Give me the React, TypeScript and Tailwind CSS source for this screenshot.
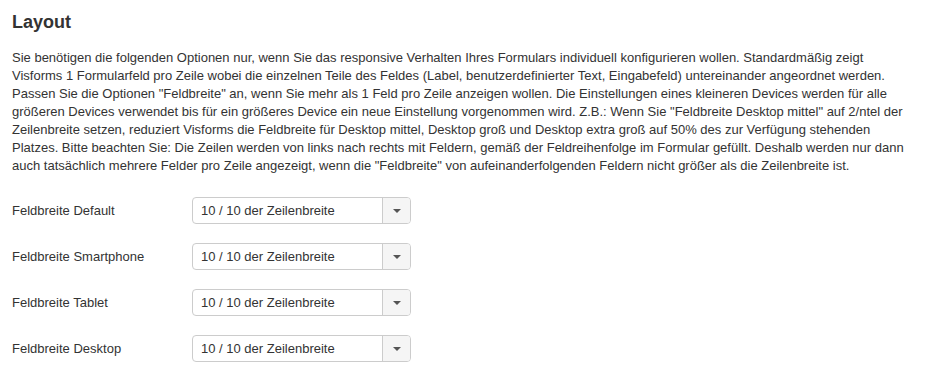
import React from "react";

const rows = ["Feldbreite Default", "Feldbreite Smartphone", "Feldbreite Tablet", "Feldbreite Desktop"];

export default function App() {
  return (
    <div className="w-[926px] h-[382px] bg-white px-3 text-[#333]" style={{ fontFamily: '"Liberation Sans", Arial, sans-serif' }}>
      <h2 className="pt-[12px] text-[18px] leading-[20px] font-bold">Layout</h2>
      <p className="mt-[17px] text-[13px] leading-[18px] w-[900px]">
        Sie benötigen die folgenden Optionen nur, wenn Sie das responsive Verhalten Ihres Formulars individuell konfigurieren wollen. Standardmäßig zeigt Visforms 1 Formularfeld pro Zeile wobei die einzelnen Teile des Feldes (Label, benutzerdefinierter Text, Eingabefeld) untereinander angeordnet werden. Passen Sie die Optionen "Feldbreite" an, wenn Sie mehr als 1 Feld pro Zeile anzeigen wollen. Die Einstellungen eines kleineren Devices werden für alle größeren Devices verwendet bis für ein größeres Device ein neue Einstellung vorgenommen wird. Z.B.: Wenn Sie "Feldbreite Desktop mittel" auf 2/ntel der Zeilenbreite setzen, reduziert Visforms die Feldbreite für Desktop mittel, Desktop groß und Desktop extra groß auf 50% des zur Verfügung stehenden Platzes. Bitte beachten Sie: Die Zeilen werden von links nach rechts mit Feldern, gemäß der Feldreihenfolge im Formular gefüllt. Deshalb werden nur dann auch tatsächlich mehrere Felder pro Zeile angezeigt, wenn die "Feldbreite" von aufeinanderfolgenden Feldern nicht größer als die Zeilenbreite ist.
      </p>
      <div className="mt-[22px] flex flex-col gap-[19px]">
        {rows.map((r) => (
          <div key={r} className="flex items-center">
            <div className="w-[180px] text-[13px]">{r}</div>
            <div className="flex h-[27px] w-[219px] rounded-[4px] border border-[#ccc] overflow-hidden">
              <div className="flex-1 flex items-center pl-[8px] text-[13px]">10 / 10 der Zeilenbreite</div>
              <div className="w-[28px] border-l border-[#ccc] bg-[#f5f5f5] flex items-center justify-center">
                <div className="w-0 h-0 border-l-[4px] border-r-[4px] border-t-[4px] border-l-transparent border-r-transparent border-t-[#555]" />
              </div>
            </div>
          </div>
        ))}
      </div>
    </div>
  );
}
